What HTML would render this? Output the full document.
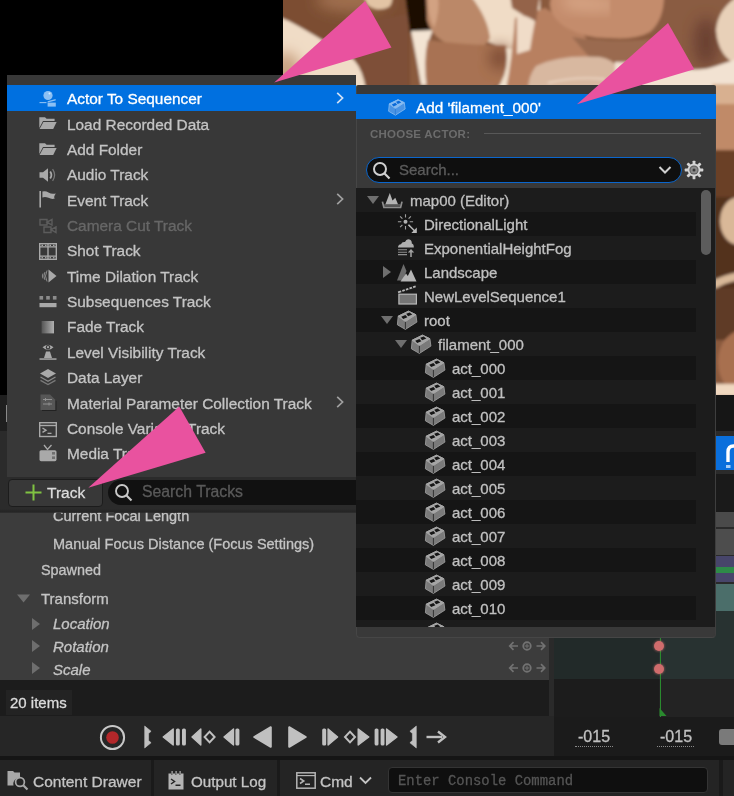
<!DOCTYPE html>
<html><head><meta charset="utf-8">
<style>
*{margin:0;padding:0;box-sizing:border-box}
html,body{width:734px;height:796px;overflow:hidden;background:#000}
body{position:relative;font-family:"Liberation Sans",sans-serif;font-size:15px;color:#c0c0c0}
.a{position:absolute}
.t{position:absolute;white-space:nowrap;line-height:20px;height:20px;-webkit-text-stroke:0.3px currentColor}
svg{position:absolute;overflow:visible}
</style></head><body><div style="position:absolute;left:0;top:0;width:734px;height:796px;overflow:hidden;will-change:transform">

<!-- ===== viewport image ===== -->
<div class="a" style="left:283px;top:0;width:451px;height:395px;overflow:hidden;background:#8a5a3e">
<svg width="451" height="395" viewBox="283 0 451 395" style="left:0;top:0">
<defs>
<filter id="bl" x="-10%" y="-10%" width="120%" height="120%"><feGaussianBlur stdDeviation="1.6"/></filter>
<filter id="bl2" x="-50%" y="-50%" width="200%" height="200%"><feGaussianBlur stdDeviation="7"/></filter>
</defs>
<g filter="url(#bl)">
<rect x="270" y="-10" width="480" height="420" fill="#8a5a3e"/>
<rect x="270" y="-10" width="140" height="100" fill="#7c4e32"/>
<ellipse cx="352" cy="0" rx="36" ry="12" fill="#a07050" filter="url(#bl2)"/>
<path d="M362 -10 H393 Q393 4 389 7 Q383 10 376 9 Q368 7 366 2Z" fill="#e2c4a4"/>
<path d="M270 14 Q285 18 300 27 Q330 44 354 60 Q363 70 366 90 H270Z" fill="#f0dcc6"/>
<ellipse cx="286" cy="72" rx="14" ry="20" fill="#c8a080" filter="url(#bl2)"/>
<path d="M358 26 Q385 18 408 14 V90 H367 Q363 68 356 61Z" fill="#7e5038"/>
<path d="M405 -5 H441 L437 30 Q420 33 410 33Z" fill="#1c0c06"/>
<path d="M411 31 L433 30 Q426 45 427 58 Q428 72 431 85 L421 85 Q416 55 411 31Z" fill="#f3e4d3"/>
<path d="M445 -5 H540 V54 Q520 50 505 48 Q480 40 465 30 Q450 16 445 -5Z" fill="#f0dcc6"/>
<path d="M426 -5 H470 Q488 18 490 38 Q484 52 458 48 Q432 40 427 20Z" fill="#bb8868"/>
<path d="M428 -4 Q427 14 434 28 Q440 12 438 -4Z" fill="#d2a282"/>
<path d="M428 40 Q470 46 505 45 Q515 56 510 72 Q502 90 470 90 H427 Q423 60 428 40Z" fill="#a87252"/>
<ellipse cx="500" cy="58" rx="11" ry="12" fill="#7e4e36" filter="url(#bl2)"/>
<path d="M506 48 Q520 50 538 52 V90 H496 Q510 72 506 48Z" fill="#f0e0cc"/>
<path d="M515 18 L545 8 L580 30 L600 56 L560 62 L538 90 H506 Q512 60 515 18Z" fill="#b88060"/>
<path d="M510 -5 H540 L536 22 Q524 16 512 8Z" fill="#94644a"/>
<path d="M517 14 Q528 16 535 21 Q532 36 530 50 L517 54Z" fill="#f0dcc8"/>
<ellipse cx="608" cy="4" rx="58" ry="34" fill="#c48c6c"/>
<path d="M560 -4 Q600 -4 630 6 Q600 14 566 8Z" fill="#d9a888" filter="url(#bl2)"/>
<path d="M648 2 Q645 18 636 30" stroke="#e6c4a4" stroke-width="1.4" fill="none"/>
<path d="M572 37 Q620 44 660 38 V64 Q620 64 590 58Z" fill="#9a6a50"/>
<path d="M536 66 Q560 54 600 57 Q625 62 625 90 H528 Q528 76 536 66Z" fill="#d8b8a0"/>
<path d="M548 83 Q575 76 605 79" stroke="#f0dccb" stroke-width="1.3" fill="none"/>
<path d="M652 -5 H740 V72 H652Z" fill="#8a5c42"/>
<path d="M610 -5 H664 Q664 20 650 32 Q636 40 610 38Z" fill="#c48c6c"/>
<ellipse cx="706" cy="42" rx="12" ry="24" fill="#6a4030" filter="url(#bl2)"/>
<path d="M740 -5 V66 Q718 58 716 30 Q718 8 740 -5Z" fill="#e8d0b8"/>
<path d="M615 62 Q650 62 680 68 Q700 72 716 66 L740 58 V90 H615Z" fill="#f2e2d2"/>
<!-- right strip -->
<rect x="712" y="84" width="30" height="70" fill="#c08a68"/>
<rect x="712" y="84" width="30" height="20" fill="#d8b090"/>
<rect x="712" y="150" width="30" height="50" fill="#6a4028"/>
<rect x="712" y="197" width="30" height="92" fill="#52301e"/>
<ellipse cx="739" cy="221" rx="19" ry="24" fill="#d9b898"/>
<path d="M712 281 Q725 274 740 272 L740 280 Q725 282 714 290Z" fill="#d8b898"/>
<rect x="712" y="288" width="30" height="52" fill="#5e3a26"/>
<ellipse cx="743" cy="362" rx="25" ry="32" fill="#a87050"/>
<rect x="712" y="384" width="30" height="12" fill="#f0d8c0"/>
</g>
</svg>
</div>

<!-- ===== background panels ===== -->
<div class="a" style="left:0;top:395px;width:734px;height:36px;background:#1f1f1f"></div>
<div class="a" style="left:715px;top:395px;width:19px;height:36px;background:#161616"></div>
<div class="a" style="left:0;top:431px;width:734px;height:81px;background:#2b2b2b"></div>
<div class="a" style="left:5.5px;top:405px;width:1.3px;height:17px;background:#8a8a8a"></div>
<!-- blue button right -->
<div class="a" style="left:715px;top:436px;width:19px;height:34px;background:#0a6fdc"></div>
<div class="a" style="left:715px;top:474px;width:19px;height:38px;background:#1a1a1a"></div>

<!-- properties panel -->
<div class="a" style="left:0;top:512px;width:549px;height:168px;background:#3c3c3c"></div>
<div class="a" style="left:549px;top:474px;width:5px;height:242px;background:#2a2a2a"></div>
<!-- timeline -->
<div class="a" style="left:554px;top:512px;width:180px;height:15px;background:#4a4a4a"></div>
<div class="a" style="left:554px;top:527px;width:180px;height:2px;background:#2a2a2a"></div>
<div class="a" style="left:554px;top:529px;width:180px;height:26px;background:#4d4d4d"></div>
<div class="a" style="left:554px;top:555px;width:180px;height:1px;background:#2a2a2a"></div>
<div class="a" style="left:554px;top:556px;width:180px;height:26px;background:#47456a"></div>
<div class="a" style="left:554px;top:567px;width:180px;height:6px;background:#2e8a48"></div>
<div class="a" style="left:554px;top:582px;width:180px;height:2px;background:#2a2a2a"></div>
<div class="a" style="left:554px;top:584px;width:180px;height:27px;background:#4b6e6a"></div>
<div class="a" style="left:554px;top:611px;width:105px;height:68px;background:#222a29"></div>
<div class="a" style="left:659px;top:611px;width:75px;height:68px;background:#283231"></div>
<div class="a" style="left:554px;top:679px;width:105px;height:38px;background:#1c1c1c"></div>
<div class="a" style="left:659px;top:679px;width:75px;height:38px;background:#232323"></div>
<div class="a" style="left:659.5px;top:611px;width:1.6px;height:106px;background:#2a8a2e"></div>
<svg style="left:659px;top:708px" width="9" height="9"><path d="M0.5 0 L0.5 8 L7.5 8 Z" fill="#2a8a2e"/></svg>
<div class="a" style="left:653.5px;top:640.5px;width:10px;height:10px;border-radius:5px;background:#cf6c6c;box-shadow:0 0 2px 1px rgba(220,120,120,.35)"></div>
<div class="a" style="left:653.5px;top:663.5px;width:10px;height:10px;border-radius:5px;background:#cf6c6c;box-shadow:0 0 2px 1px rgba(220,120,120,.35)"></div>

<!-- items row -->
<div class="a" style="left:0;top:680px;width:549px;height:36px;background:#1c1c1c"></div>
<div class="a" style="left:6px;top:690px;width:66px;height:25px;background:#232323"></div>
<div class="t" style="left:10px;top:693px;color:#dcdcdc">20 items</div>

<!-- transport -->
<div class="a" style="left:0;top:716px;width:554px;height:40px;background:#262626"></div>
<div class="a" style="left:554px;top:717px;width:180px;height:39px;background:#1b1b1b"></div>
<div class="a" style="left:0;top:756px;width:734px;height:4px;background:#151515"></div>
<!-- status bar -->
<div class="a" style="left:0;top:760px;width:734px;height:36px;background:#242424"></div>

<div class="t" style="left:53px;top:506px;color:#c4c4c4;font-size:14.5px;">Current Focal Length</div>
<div class="t" style="left:53px;top:534px;color:#c4c4c4;font-size:14.5px;">Manual Focus Distance (Focus Settings)</div>
<div class="t" style="left:41px;top:560px;color:#c4c4c4;font-size:14.4px;">Spawned</div>
<div class="t" style="left:41px;top:589px;color:#c4c4c4;font-size:15px;">Transform</div>
<div class="t" style="left:53px;top:614px;color:#c4c4c4;font-style:italic;font-size:15px;">Location</div>
<div class="t" style="left:53px;top:637px;color:#c4c4c4;font-style:italic;font-size:15px;">Rotation</div>
<div class="t" style="left:53px;top:660px;color:#c4c4c4;font-style:italic;font-size:15px;">Scale</div>
<svg style="left:17px;top:594px" width="13" height="9" viewBox="0 0 13 9"><path d="M0 0.5 H13 L6.5 8.5Z" fill="#6e6e6e"/></svg>
<svg style="left:32px;top:618px" width="8" height="12" viewBox="0 0 8 12"><path d="M0 0 L8 6 L0 12Z" fill="#6e6e6e"/></svg>
<svg style="left:32px;top:640px" width="8" height="12" viewBox="0 0 8 12"><path d="M0 0 L8 6 L0 12Z" fill="#6e6e6e"/></svg>
<svg style="left:32px;top:662px" width="8" height="12" viewBox="0 0 8 12"><path d="M0 0 L8 6 L0 12Z" fill="#6e6e6e"/></svg>
<svg style="left:508px;top:640px" width="40" height="12" viewBox="0 0 40 12"><g stroke="#727272" stroke-width="1.7" fill="none"><path d="M10 6 H2 M5.5 2.2 L1.7 6 L5.5 9.8"/><circle cx="19" cy="6" r="3.8"/><path d="M19 3.5 V8.5 M16.5 6 H21.5" stroke-width="1"/><path d="M28.5 6 H36.5 M33 2.2 L36.8 6 L33 9.8"/></g></svg>
<svg style="left:508px;top:662px" width="40" height="12" viewBox="0 0 40 12"><g stroke="#727272" stroke-width="1.7" fill="none"><path d="M10 6 H2 M5.5 2.2 L1.7 6 L5.5 9.8"/><circle cx="19" cy="6" r="3.8"/><path d="M19 3.5 V8.5 M16.5 6 H21.5" stroke-width="1"/><path d="M28.5 6 H36.5 M33 2.2 L36.8 6 L33 9.8"/></g></svg>
<svg style="left:99px;top:724px" width="27" height="27" viewBox="0 0 27 27"><circle cx="13.5" cy="13.5" r="11.6" stroke="#c8c8c8" stroke-width="2" fill="none"/><circle cx="13.5" cy="13.5" r="6.3" fill="#b3272a"/></svg>
<svg style="left:144px;top:726px" width="8" height="22" viewBox="0 0 8 22"><path d="M0.7 0 L7.1 5.3 L4.6 7.5 V14.5 L7.1 16.7 L0.7 22 Z" fill="#c0c0c0" stroke="#c0c0c0" stroke-width="0.6" stroke-linejoin="round"/></svg>
<svg style="left:162px;top:728px" width="25" height="18" viewBox="0 0 25 18"><path d="M1.2 9 L11.2 1 V17Z" fill="#c0c0c0" stroke="#c0c0c0" stroke-width="1.4" stroke-linejoin="round"/><rect x="13.9" y="0.5" width="3.9" height="17" rx="1.6" fill="#c0c0c0"/><rect x="20" y="0.5" width="3.9" height="17" rx="1.6" fill="#c0c0c0"/></svg>
<svg style="left:191px;top:728px" width="25" height="18" viewBox="0 0 25 18"><path d="M1 9 L9.8 1 V17Z" fill="#c0c0c0" stroke="#c0c0c0" stroke-width="1.4" stroke-linejoin="round"/><path d="M18.6 3.6 L23.6 9 L18.6 14.4 L13.6 9Z" fill="none" stroke="#c0c0c0" stroke-width="2"/></svg>
<svg style="left:223px;top:728px" width="17" height="18" viewBox="0 0 17 18"><path d="M1 9 L10.5 1 V17Z" fill="#c0c0c0" stroke="#c0c0c0" stroke-width="1.4" stroke-linejoin="round"/><rect x="12.4" y="0.5" width="4" height="17" rx="1.6" fill="#c0c0c0"/></svg>
<svg style="left:253px;top:726px" width="19" height="22" viewBox="0 0 19 22"><path d="M1.2 11 L17.8 1.2 V20.8Z" fill="#c0c0c0" stroke="#c0c0c0" stroke-width="2" stroke-linejoin="round"/></svg>
<svg style="left:288px;top:726px" width="19" height="22" viewBox="0 0 19 22"><path d="M17.8 11 L1.2 1.2 V20.8Z" fill="#c0c0c0" stroke="#c0c0c0" stroke-width="2" stroke-linejoin="round"/></svg>
<svg style="left:322px;top:728px" width="17" height="18" viewBox="0 0 17 18"><rect x="0.2" y="0.5" width="4" height="17" rx="1.6" fill="#c0c0c0"/><path d="M15.6 9 L6.1 1 V17Z" fill="#c0c0c0" stroke="#c0c0c0" stroke-width="1.4" stroke-linejoin="round"/></svg>
<svg style="left:344px;top:728px" width="26" height="18" viewBox="0 0 26 18"><path d="M6 3.6 L11 9 L6 14.4 L1 9Z" fill="none" stroke="#c0c0c0" stroke-width="2"/><path d="M24.8 9 L14.2 1 V17Z" fill="#c0c0c0" stroke="#c0c0c0" stroke-width="1.4" stroke-linejoin="round"/></svg>
<svg style="left:374px;top:728px" width="24" height="18" viewBox="0 0 24 18"><rect x="0.6" y="0.5" width="3.9" height="17" rx="1.6" fill="#c0c0c0"/><rect x="6.6" y="0.5" width="3.9" height="17" rx="1.6" fill="#c0c0c0"/><path d="M23 9 L12.6 1 V17Z" fill="#c0c0c0" stroke="#c0c0c0" stroke-width="1.4" stroke-linejoin="round"/></svg>
<svg style="left:409px;top:726px" width="8" height="22" viewBox="0 0 8 22"><path d="M7.3 0 L0.9 5.3 L3.4 7.5 V14.5 L0.9 16.7 L7.3 22 Z" fill="#c0c0c0" stroke="#c0c0c0" stroke-width="0.6" stroke-linejoin="round"/></svg>
<svg style="left:426px;top:730px" width="21" height="14" viewBox="0 0 21 14"><path d="M0.5 7 H16" stroke="#c0c0c0" stroke-width="2.4"/><path d="M12 1.5 L19 7 L12 12.5" stroke="#c0c0c0" stroke-width="2.4" fill="none"/></svg>
<div class="t" style="left:578px;top:727px;color:#c0c0c0;font-size:16px">-015</div>
<div class="a" style="left:575px;top:746px;width:38px;height:0;border-top:1px dotted #8a8a8a"></div>
<div class="t" style="left:660px;top:727px;color:#c0c0c0;font-size:16px">-015</div>
<div class="a" style="left:657px;top:746px;width:37px;height:0;border-top:1px dotted #8a8a8a"></div>
<div class="a" style="left:719px;top:729px;width:20px;height:16px;border-radius:3px;background:#7a7a7a"></div>
<div class="a" style="left:151px;top:760px;width:3px;height:36px;background:#1a1a1a"></div>
<div class="a" style="left:277px;top:760px;width:3px;height:36px;background:#1a1a1a"></div>
<div class="a" style="left:719px;top:760px;width:4px;height:36px;background:#1a1a1a"></div>
<svg style="left:7px;top:770px" width="22" height="20" viewBox="0 0 22 20"><path d="M0.5 1 H6 L7.5 2.5 H13 V8 A6 6 0 0 0 6.5 15.5 H0.5Z" fill="#a8a8a8"/><circle cx="13" cy="12" r="4.4" stroke="#a8a8a8" stroke-width="1.7" fill="none"/><path d="M16.2 15.2 L20.5 19.5" stroke="#a8a8a8" stroke-width="2.2"/></svg>
<div class="t" style="left:33px;top:772px;color:#c4c4c4;font-size:15.5px">Content Drawer</div>
<svg style="left:168px;top:771px" width="16" height="19" viewBox="0 0 16 19"><path d="M0.5 2.5 H15.5 V18.5 H0.5Z" fill="#b4b4b4"/><g fill="#242424"><rect x="3" y="0" width="2" height="4"/><rect x="7" y="0" width="2" height="4"/><rect x="11" y="0" width="2" height="4"/></g><rect x="3.5" y="0" width="1.2" height="4" fill="#b4b4b4"/><rect x="7.5" y="0" width="1.2" height="4" fill="#b4b4b4"/><rect x="11.5" y="0" width="1.2" height="4" fill="#b4b4b4"/><path d="M3 8 L6.5 10.5 L3 13" stroke="#242424" stroke-width="1.5" fill="none"/><rect x="7.5" y="13.5" width="5" height="1.5" fill="#242424"/></svg>
<div class="t" style="left:191px;top:772px;color:#c4c4c4;font-size:15.2px">Output Log</div>
<svg style="left:296px;top:772px" width="20" height="17" viewBox="0 0 20 17"><rect x="0.8" y="0.8" width="18.4" height="15.4" stroke="#b4b4b4" stroke-width="1.5" fill="none"/><path d="M0.8 3.6 H19.2" stroke="#b4b4b4" stroke-width="1.2"/><path d="M4 6.5 L7.8 9 L4 11.5" stroke="#b4b4b4" stroke-width="1.5" fill="none"/><rect x="9" y="11.5" width="5" height="1.5" fill="#b4b4b4"/></svg>
<div class="t" style="left:320px;top:772px;color:#c4c4c4;font-size:15.5px">Cmd</div>
<svg style="left:359px;top:776px" width="13" height="9" viewBox="0 0 13 9"><path d="M1 1.5 L6.5 7 L12 1.5" stroke="#c4c4c4" stroke-width="1.8" fill="none"/></svg>
<div class="a" style="left:388px;top:767px;width:320px;height:26px;border-radius:4px;background:#0f0f0f;border:1px solid #343434"></div>
<div class="t" style="left:398px;top:771px;color:#555555;font-family:'Liberation Mono',monospace;font-size:13.9px">Enter Console Command</div>
<svg style="left:724px;top:440px" width="15" height="30" viewBox="0 0 15 30"><path d="M4 22 V12 Q4 6 9.5 6 Q15 6 15 12 V22" stroke="#ffffff" stroke-width="3.4" fill="none"/><rect x="2" y="25" width="4.5" height="3" fill="#a8cdf5"/></svg>
<!-- ===== left menu ===== -->

<div class="a" style="left:7px;top:75px;width:349px;height:402px;background:#383838"></div>
<div class="a" style="left:7px;top:85px;width:349px;height:26px;background:#0070e0"></div>
<div class="t" style="left:67px;top:89px;color:#ffffff;font-size:15.4px">Actor To Sequencer</div>
<svg style="left:39px;top:89px" width="18" height="18" viewBox="0 0 18 18"><circle cx="9" cy="6.5" r="4.6" fill="#8cc0f4"/><circle cx="10.5" cy="4.5" r="1" fill="#d8ebff"/><path d="M0.5 13.6 H7.5" stroke="#8cc0f4" stroke-width="1.1"/><path d="M8.6 12.2 L16.6 10 V11.4 L8.6 13.6Z" fill="#8cc0f4"/><rect x="8.6" y="13.6" width="8.2" height="4" fill="#8cc0f4"/></svg>
<svg style="left:336px;top:92px" width="8" height="12" viewBox="0 0 8 12"><path d="M1.2 0.8 L6.6 6 L1.2 11.2" stroke="#cfe0f5" stroke-width="1.7" fill="none"/></svg>
<div class="t" style="left:67px;top:115px;color:#c4c4c4;font-size:15.4px">Load Recorded Data</div>
<svg style="left:39px;top:114px" width="18" height="18" viewBox="0 0 18 18"><path d="M0.3 3.2 H6 L7.6 4.8 H15.6 V7 H4 L0.3 14Z" fill="#a9a9a9"/><path d="M4.4 7.9 H17.6 L14.2 15 H0.6Z" fill="#a9a9a9"/></svg>
<div class="t" style="left:67px;top:140px;color:#c4c4c4;font-size:15.4px">Add Folder</div>
<svg style="left:39px;top:140px" width="18" height="18" viewBox="0 0 18 18"><path d="M0.3 3.2 H6 L7.6 4.8 H15.6 V7 H4 L0.3 14Z" fill="#a9a9a9"/><path d="M4.4 7.9 H17.6 L14.2 15 H0.6Z" fill="#a9a9a9"/></svg>
<div class="t" style="left:67px;top:165px;color:#c4c4c4;font-size:15.4px">Audio Track</div>
<svg style="left:39px;top:165px" width="18" height="18" viewBox="0 0 18 18"><g transform="translate(0 1)"><path d="M0.5 6.3 H4 L9 2.2 V15.8 L4 11.7 H0.5Z" fill="#a9a9a9"/><path d="M11.2 5.5 Q13.6 9 11.2 12.5" stroke="#a9a9a9" stroke-width="1.8" fill="none"/><path d="M13.6 3.2 Q17.6 9 13.6 14.8" stroke="#7a7a7a" stroke-width="1.2" fill="none"/></g></svg>
<div class="t" style="left:67px;top:191px;color:#c4c4c4;font-size:15.4px">Event Track</div>
<svg style="left:39px;top:190px" width="18" height="18" viewBox="0 0 18 18"><rect x="0.4" y="1" width="1.6" height="16.5" fill="#a9a9a9"/><path d="M3.4 1.6 Q6.5 0.6 9.5 2.6 Q13 4.6 16.8 3.4 Q14.2 7 15.8 8.6 Q12.6 9.6 9.5 7.8 Q6.2 6.2 3.4 7.4Z" fill="#a9a9a9"/></svg>
<svg style="left:336px;top:193px" width="8" height="12" viewBox="0 0 8 12"><path d="M1.2 0.8 L6.6 6 L1.2 11.2" stroke="#a0a0a0" stroke-width="1.7" fill="none"/></svg>
<div class="t" style="left:67px;top:216px;color:#676767;font-size:15.4px">Camera Cut Track</div>
<svg style="left:39px;top:216px" width="18" height="18" viewBox="0 0 18 18"><g fill="none" stroke="#5c5c5c" stroke-width="1.4"><path d="M1 3.5 H8 V9 H1Z M8 6.2 L13 3.5 V9Z"/><path d="M5 11 H12 V16.5 H5Z M12 13.7 L17 11 V16.5Z"/></g></svg>
<div class="t" style="left:67px;top:241px;color:#c4c4c4;font-size:15.4px">Shot Track</div>
<svg style="left:39px;top:241px" width="18" height="18" viewBox="0 0 18 18"><g transform="translate(0 1.5)"><g fill="none" stroke="#a9a9a9" stroke-width="1.4"><rect x="0.7" y="1.2" width="16.6" height="15.6"/><path d="M0.7 4.4 H17.3 M0.7 13.6 H17.3 M9 1.2 V16.8"/></g><g fill="#a9a9a9"><rect x="2.5" y="2.2" width="1.5" height="1.3"/><rect x="6" y="2.2" width="1.5" height="1.3"/><rect x="10.5" y="2.2" width="1.5" height="1.3"/><rect x="14" y="2.2" width="1.5" height="1.3"/><rect x="2.5" y="14.6" width="1.5" height="1.3"/><rect x="6" y="14.6" width="1.5" height="1.3"/><rect x="10.5" y="14.6" width="1.5" height="1.3"/><rect x="14" y="14.6" width="1.5" height="1.3"/></g></g></svg>
<div class="t" style="left:67px;top:267px;color:#c4c4c4;font-size:15.4px">Time Dilation Track</div>
<svg style="left:39px;top:267px" width="18" height="18" viewBox="0 0 18 18"><path d="M9.5 2.5 L17.5 9 L9.5 15.5Z" fill="#a9a9a9"/><g stroke="#8a8a8a" stroke-width="1" fill="none"><path d="M8 3.5 Q5 9 8 14.5"/><path d="M6 5 Q3.8 9 6 13"/><path d="M4 6.5 Q2.6 9 4 11.5"/></g></svg>
<div class="t" style="left:67px;top:292px;color:#c4c4c4;font-size:15.4px">Subsequences Track</div>
<svg style="left:39px;top:292px" width="18" height="18" viewBox="0 0 18 18"><rect x="0.5" y="4" width="3.6" height="3.6" fill="#8c8c8c"/><rect x="7.2" y="4" width="3.6" height="3.6" fill="#8c8c8c"/><rect x="13.9" y="4" width="3.6" height="3.6" fill="#8c8c8c"/><rect x="0.5" y="11" width="17" height="4.2" fill="#a9a9a9"/></svg>
<div class="t" style="left:67px;top:317px;color:#c4c4c4;font-size:15.4px">Fade Track</div>
<svg style="left:39px;top:317px" width="18" height="18" viewBox="0 0 18 18"><defs><linearGradient id="fg" x1="0" x2="1"><stop offset="0" stop-color="#555"/><stop offset="1" stop-color="#b0b0b0"/></linearGradient></defs><rect x="2.6" y="4" width="12.4" height="12.4" fill="url(#fg)"/></svg>
<div class="t" style="left:67px;top:343px;color:#c4c4c4;font-size:15.4px">Level Visibility Track</div>
<svg style="left:39px;top:343px" width="18" height="18" viewBox="0 0 18 18"><path d="M3.5 4.2 Q9 -0.8 14.5 4.2 Q9 9.2 3.5 4.2Z" fill="#a9a9a9"/><circle cx="9" cy="4.2" r="2.2" fill="#383838"/><circle cx="9" cy="4.2" r="1.1" fill="#a9a9a9"/><path d="M5 15 L7 8.5 H11 L13 15Z" fill="#a9a9a9"/><rect x="0.5" y="15.3" width="17" height="1.5" fill="#a9a9a9"/></svg>
<div class="t" style="left:67px;top:368px;color:#c4c4c4;font-size:15.4px">Data Layer</div>
<svg style="left:39px;top:368px" width="18" height="18" viewBox="0 0 18 18"><path d="M9 1 L17 5.5 L9 10 L1 5.5Z" fill="#a9a9a9"/><path d="M1.5 9 L9 13.2 L16.5 9" stroke="#8a8a8a" stroke-width="1.3" fill="none"/><path d="M1.5 12.4 L9 16.6 L16.5 12.4" stroke="#7a7a7a" stroke-width="1.3" fill="none"/></svg>
<div class="t" style="left:67px;top:394px;color:#c4c4c4;font-size:15.4px">Material Parameter Collection Track</div>
<svg style="left:39px;top:393px" width="18" height="18" viewBox="0 0 18 18"><path d="M1.5 1.5 H11 L16.5 7 V17 H1.5Z" fill="#565656"/><path d="M3 17 H16.5 V7 L17.5 8 V18 H3Z" fill="#222"/><g stroke="#909090" stroke-width="1"><path d="M4 6.5 H13 M4 11 H13 M6.5 5 V8 M10 9.5 V12.5"/></g></svg>
<svg style="left:336px;top:396px" width="8" height="12" viewBox="0 0 8 12"><path d="M1.2 0.8 L6.6 6 L1.2 11.2" stroke="#a0a0a0" stroke-width="1.7" fill="none"/></svg>
<div class="t" style="left:67px;top:419px;color:#c4c4c4;font-size:15.4px">Console Variable Track</div>
<svg style="left:39px;top:419px" width="18" height="18" viewBox="0 0 18 18"><g transform="translate(0 1.5)"><g fill="none" stroke="#a9a9a9" stroke-width="1.4"><rect x="0.7" y="2.2" width="16.6" height="13.8"/><path d="M0.7 5 H17.3"/><path d="M3.5 7.5 L7 9.7 L3.5 11.9"/></g><rect x="8.5" y="12.2" width="4" height="1.3" fill="#a9a9a9"/></g></svg>
<div class="t" style="left:67px;top:444px;color:#c4c4c4;font-size:15.4px">Media Track</div>
<svg style="left:39px;top:444px" width="18" height="18" viewBox="0 0 18 18"><rect x="0.5" y="6.2" width="17" height="11" rx="1.6" fill="#a9a9a9"/><rect x="13" y="8" width="3" height="2.6" fill="#707070"/><rect x="13" y="12.4" width="3" height="2.6" fill="#707070"/><path d="M5 1 L8.5 5.5 L12.5 1" stroke="#a9a9a9" stroke-width="1.3" fill="none"/></svg>
<!-- ===== toolbar row ===== -->
<div class="a" style="left:0;top:477px;width:356px;height:35px;background:#2b2b2b"></div>
<div class="a" style="left:0;top:509px;width:356px;height:4px;background:linear-gradient(#2b2b2b,#252525 60%,rgba(40,40,40,0.6))"></div>
<div class="a" style="left:8px;top:479px;width:95px;height:28px;border-radius:4px;background:#383838;border:1px solid #1c1c1c"></div>
<svg style="left:25px;top:484px" width="17" height="17" viewBox="0 0 17 17"><path d="M8.5 0.5 V16.5 M0.5 8.5 H16.5" stroke="#80c342" stroke-width="2"/></svg>
<div class="t" style="left:47px;top:483px;color:#dcdcdc;font-size:15.5px">Track</div>
<div class="a" style="left:108px;top:480px;width:260px;height:25px;border-radius:12.5px;background:#111111"></div>
<svg style="left:114px;top:483px" width="20" height="20" viewBox="0 0 20 20"><circle cx="8" cy="8" r="6" stroke="#c8c8c8" stroke-width="1.9" fill="none"/><path d="M12.3 12.3 L17.5 17.5" stroke="#c8c8c8" stroke-width="2.1"/></svg>
<div class="t" style="left:142px;top:482px;color:#5a5a5a;font-size:15.8px">Search Tracks</div>
<!-- ===== submenu ===== -->
<div class="a" style="left:356px;top:85px;width:360px;height:553px;background:#393939;border:1.5px solid #464646;border-top:0;border-right-color:#3e3e3e;border-radius:2px 2px 4px 4px"></div>

<div class="a" style="left:356px;top:94px;width:360px;height:25px;background:#0070e0"></div>
<svg style="left:383.6px;top:97.1px" width="25.5" height="20.4" viewBox="0 0 30 24"><path d="M6.2 8.2 L16.5 3.2 L23.9 6.7 L24.9 14.1 L13.4 21.4 L5.4 16.8Z" fill="#4a94e4" stroke="#8cc0f2" stroke-width="0.9" stroke-linejoin="round"/><path d="M6.2 8.2 L16.5 3.2 L23.9 6.7 L13.4 13.5Z" fill="#86bbf1" stroke="#86bbf1" stroke-width="1" stroke-linejoin="round"/><path d="M13.4 13.9 V21" stroke="#2a7ad8" stroke-width="0.9"/><path d="M9.2 8.8 L13.4 6.9 L15.4 9.2 L11.2 11.1Z M14.2 5.7 L17.6 4.4 L20.3 6.5 L16.1 8.2Z" fill="#0a6ad8"/></svg>
<div class="t" style="left:416px;top:98px;color:#ffffff;font-size:15.3px">Add 'filament_000'</div>
<div class="t" style="left:370px;top:123.5px;color:#6c6c6c;font-size:11.5px;font-weight:bold;letter-spacing:0.24px;-webkit-text-stroke:0">CHOOSE ACTOR:</div>
<div class="a" style="left:484px;top:133px;width:217px;height:1px;background:#585858"></div>
<div class="a" style="left:366px;top:157px;width:316px;height:26px;border-radius:13px;background:#0f0f0f;border:1.8px solid #0b66cc"></div>
<svg style="left:372px;top:161px" width="20" height="20" viewBox="0 0 20 20"><circle cx="8" cy="8" r="6" stroke="#d0d0d0" stroke-width="2" fill="none"/><path d="M12.3 12.3 L17.5 17.5" stroke="#d0d0d0" stroke-width="2.2"/></svg>
<div class="t" style="left:399px;top:160px;color:#5c5c5c">Search...</div>
<svg style="left:658px;top:165px" width="14" height="10" viewBox="0 0 14 10"><path d="M1.5 2 L7 7.5 L12.5 2" stroke="#d0d0d0" stroke-width="2" fill="none"/></svg>
<svg style="left:685px;top:161px" width="18" height="18" viewBox="0 0 18 18"><rect x="7.6" y="-0.3" width="2.8" height="5" rx="0.6" fill="#d4d4d4" transform="rotate(0 9 9)"/><rect x="7.6" y="-0.3" width="2.8" height="5" rx="0.6" fill="#d4d4d4" transform="rotate(45 9 9)"/><rect x="7.6" y="-0.3" width="2.8" height="5" rx="0.6" fill="#d4d4d4" transform="rotate(90 9 9)"/><rect x="7.6" y="-0.3" width="2.8" height="5" rx="0.6" fill="#d4d4d4" transform="rotate(135 9 9)"/><rect x="7.6" y="-0.3" width="2.8" height="5" rx="0.6" fill="#d4d4d4" transform="rotate(180 9 9)"/><rect x="7.6" y="-0.3" width="2.8" height="5" rx="0.6" fill="#d4d4d4" transform="rotate(225 9 9)"/><rect x="7.6" y="-0.3" width="2.8" height="5" rx="0.6" fill="#d4d4d4" transform="rotate(270 9 9)"/><rect x="7.6" y="-0.3" width="2.8" height="5" rx="0.6" fill="#d4d4d4" transform="rotate(315 9 9)"/><circle cx="9" cy="9" r="6.4" fill="#d4d4d4"/><circle cx="9" cy="9" r="4.6" fill="#5a5a5a"/><circle cx="9" cy="9" r="3.6" fill="#8a8a8a"/><circle cx="9" cy="9" r="1.5" fill="#3a3a3a"/></svg>
<div class="a" style="left:356px;top:188px;width:359px;height:439px;background:#1c1c1c;overflow:hidden">
<svg style="left:11px;top:8px" width="12" height="8" viewBox="0 0 12 8"><path d="M0 0 H12 L6 8Z" fill="#6f6f6f"/></svg>
<svg style="left:27px;top:0px" width="22" height="24" viewBox="0 0 22 24"><path d="M2.4 16.3 L6.8 4.9 L9.5 12.5 L12.3 9.8 L15 16.3Z" fill="#b4b4b4"/><path d="M-0.6 13.6 L0.9 19.4 H17.6 L19 13.6" stroke="#8e8e8e" stroke-width="1.7" fill="none"/><path d="M1.2 17 H17.4" stroke="#8e8e8e" stroke-width="1"/></svg>
<div class="t" style="left:54px;top:3px;color:#c0c0c0">map00 (Editor)</div>
<div class="a" style="left:0;top:24px;width:340px;height:24px;background:#151515"></div>
<svg style="left:41px;top:24px" width="22" height="24" viewBox="0 0 22 24"><circle cx="8.5" cy="9.8" r="2" fill="#b0b0b0"/><g stroke="#a0a0a0" stroke-width="1.1"><path d="M8.5 2.2 V5.6 M8.5 14 V17.4 M0.9 9.8 H4.3 M12.7 9.8 H16.1 M3.1 4.4 L5.4 6.7 M11.6 12.9 L13 14.3 M13.9 4.4 L11.6 6.7 M5.4 12.9 L3.1 15.2"/></g><path d="M11.5 12.8 L18.5 19.8" stroke="#b8b8b8" stroke-width="1.5"/><path d="M19.8 21 L19.8 15.5 L14.3 21Z" fill="#b8b8b8"/></svg>
<div class="t" style="left:68px;top:27px;color:#c0c0c0">DirectionalLight</div>
<svg style="left:41px;top:48px" width="22" height="24" viewBox="0 0 22 24"><path d="M1 11.5 Q1 8.5 4 8.3 Q5 5.4 8 6 Q9.5 2.5 12.5 3.6 Q15 4.5 14.8 7.5 Q17 8 16.8 11.5Z" fill="#b0b0b0"/><g stroke="#909090" stroke-width="1.1"><path d="M1 13.8 H10 M1 16.2 H10 M1 18.6 H10"/></g><path d="M14 21 V14.5" stroke="#a0a0a0" stroke-width="1.6"/><path d="M10.8 16.5 L14 13 L17.2 16.5Z" fill="#a0a0a0"/></svg>
<div class="t" style="left:68px;top:51px;color:#c0c0c0">ExponentialHeightFog</div>
<div class="a" style="left:0;top:72px;width:340px;height:24px;background:#151515"></div>
<svg style="left:27px;top:78px" width="8" height="12" viewBox="0 0 8 12"><path d="M0 0 L8 6 L0 12Z" fill="#6f6f6f"/></svg>
<svg style="left:41px;top:72px" width="22" height="24" viewBox="0 0 22 24"><path d="M0 20.6 L6.5 4 L9.5 11 L6 20.6Z" fill="#6c6c6c"/><path d="M3.5 21.4 L9 13.5 L10.8 16 L14 9.5 L19.5 21.4Z" fill="#b4b4b4"/></svg>
<div class="t" style="left:68px;top:75px;color:#c0c0c0">Landscape</div>
<svg style="left:41px;top:96px" width="22" height="24" viewBox="0 0 22 24"><rect x="1.9" y="10.2" width="17.5" height="9.8" fill="#757575" stroke="#b8b8b8" stroke-width="1.2"/><path d="M0.8 7.4 L18.4 1.4 L18.9 3.3 L1.3 9.3Z" fill="#b8b8b8"/><g fill="#1c1c1c"><rect x="4" y="5.2" width="1.2" height="3" transform="rotate(-19 4.6 6.7)"/><rect x="7.6" y="4" width="1.2" height="3" transform="rotate(-19 8.2 5.5)"/><rect x="11.2" y="2.8" width="1.2" height="3" transform="rotate(-19 11.8 4.3)"/><rect x="14.8" y="1.6" width="1.2" height="3" transform="rotate(-19 15.4 3.1)"/></g></svg>
<div class="t" style="left:68px;top:99px;color:#c0c0c0">NewLevelSequence1</div>
<div class="a" style="left:0;top:120px;width:340px;height:24px;background:#151515"></div>
<svg style="left:25px;top:128px" width="12" height="8" viewBox="0 0 12 8"><path d="M0 0 H12 L6 8Z" fill="#6f6f6f"/></svg>
<svg style="left:36px;top:120px" width="30" height="24" viewBox="0 0 30 24"><path d="M6.2 8.2 L16.5 3.2 L23.9 6.7 L24.9 14.1 L13.4 21.4 L5.4 16.8Z" fill="#7a7a7a" stroke="#9a9a9a" stroke-width="0.9" stroke-linejoin="round"/><path d="M6.2 8.2 L16.5 3.2 L23.9 6.7 L13.4 13.5Z" fill="#a6a6a6" stroke="#a6a6a6" stroke-width="1" stroke-linejoin="round"/><path d="M13.4 13.9 V21" stroke="#2a2a2a" stroke-width="0.9"/><path d="M9.2 8.8 L13.4 6.9 L15.4 9.2 L11.2 11.1Z M14.2 5.7 L17.6 4.4 L20.3 6.5 L16.1 8.2Z" fill="#161616"/></svg>
<div class="t" style="left:68px;top:123px;color:#c0c0c0">root</div>
<svg style="left:39px;top:152px" width="12" height="8" viewBox="0 0 12 8"><path d="M0 0 H12 L6 8Z" fill="#6f6f6f"/></svg>
<svg style="left:50px;top:144px" width="30" height="24" viewBox="0 0 30 24"><path d="M6.2 8.2 L16.5 3.2 L23.9 6.7 L24.9 14.1 L13.4 21.4 L5.4 16.8Z" fill="#7a7a7a" stroke="#9a9a9a" stroke-width="0.9" stroke-linejoin="round"/><path d="M6.2 8.2 L16.5 3.2 L23.9 6.7 L13.4 13.5Z" fill="#a6a6a6" stroke="#a6a6a6" stroke-width="1" stroke-linejoin="round"/><path d="M13.4 13.9 V21" stroke="#2a2a2a" stroke-width="0.9"/><path d="M9.2 8.8 L13.4 6.9 L15.4 9.2 L11.2 11.1Z M14.2 5.7 L17.6 4.4 L20.3 6.5 L16.1 8.2Z" fill="#161616"/></svg>
<div class="t" style="left:82px;top:147px;color:#c0c0c0">filament_000</div>
<div class="a" style="left:0;top:168px;width:340px;height:24px;background:#151515"></div>
<svg style="left:64px;top:168px" width="30" height="24" viewBox="0 0 30 24"><path d="M6.2 8.2 L16.5 3.2 L23.9 6.7 L24.9 14.1 L13.4 21.4 L5.4 16.8Z" fill="#7a7a7a" stroke="#9a9a9a" stroke-width="0.9" stroke-linejoin="round"/><path d="M6.2 8.2 L16.5 3.2 L23.9 6.7 L13.4 13.5Z" fill="#a6a6a6" stroke="#a6a6a6" stroke-width="1" stroke-linejoin="round"/><path d="M13.4 13.9 V21" stroke="#2a2a2a" stroke-width="0.9"/><path d="M9.2 8.8 L13.4 6.9 L15.4 9.2 L11.2 11.1Z M14.2 5.7 L17.6 4.4 L20.3 6.5 L16.1 8.2Z" fill="#161616"/></svg>
<div class="t" style="left:96px;top:171px;color:#c0c0c0">act_000</div>
<svg style="left:64px;top:192px" width="30" height="24" viewBox="0 0 30 24"><path d="M6.2 8.2 L16.5 3.2 L23.9 6.7 L24.9 14.1 L13.4 21.4 L5.4 16.8Z" fill="#7a7a7a" stroke="#9a9a9a" stroke-width="0.9" stroke-linejoin="round"/><path d="M6.2 8.2 L16.5 3.2 L23.9 6.7 L13.4 13.5Z" fill="#a6a6a6" stroke="#a6a6a6" stroke-width="1" stroke-linejoin="round"/><path d="M13.4 13.9 V21" stroke="#2a2a2a" stroke-width="0.9"/><path d="M9.2 8.8 L13.4 6.9 L15.4 9.2 L11.2 11.1Z M14.2 5.7 L17.6 4.4 L20.3 6.5 L16.1 8.2Z" fill="#161616"/></svg>
<div class="t" style="left:96px;top:195px;color:#c0c0c0">act_001</div>
<div class="a" style="left:0;top:216px;width:340px;height:24px;background:#151515"></div>
<svg style="left:64px;top:216px" width="30" height="24" viewBox="0 0 30 24"><path d="M6.2 8.2 L16.5 3.2 L23.9 6.7 L24.9 14.1 L13.4 21.4 L5.4 16.8Z" fill="#7a7a7a" stroke="#9a9a9a" stroke-width="0.9" stroke-linejoin="round"/><path d="M6.2 8.2 L16.5 3.2 L23.9 6.7 L13.4 13.5Z" fill="#a6a6a6" stroke="#a6a6a6" stroke-width="1" stroke-linejoin="round"/><path d="M13.4 13.9 V21" stroke="#2a2a2a" stroke-width="0.9"/><path d="M9.2 8.8 L13.4 6.9 L15.4 9.2 L11.2 11.1Z M14.2 5.7 L17.6 4.4 L20.3 6.5 L16.1 8.2Z" fill="#161616"/></svg>
<div class="t" style="left:96px;top:219px;color:#c0c0c0">act_002</div>
<svg style="left:64px;top:240px" width="30" height="24" viewBox="0 0 30 24"><path d="M6.2 8.2 L16.5 3.2 L23.9 6.7 L24.9 14.1 L13.4 21.4 L5.4 16.8Z" fill="#7a7a7a" stroke="#9a9a9a" stroke-width="0.9" stroke-linejoin="round"/><path d="M6.2 8.2 L16.5 3.2 L23.9 6.7 L13.4 13.5Z" fill="#a6a6a6" stroke="#a6a6a6" stroke-width="1" stroke-linejoin="round"/><path d="M13.4 13.9 V21" stroke="#2a2a2a" stroke-width="0.9"/><path d="M9.2 8.8 L13.4 6.9 L15.4 9.2 L11.2 11.1Z M14.2 5.7 L17.6 4.4 L20.3 6.5 L16.1 8.2Z" fill="#161616"/></svg>
<div class="t" style="left:96px;top:243px;color:#c0c0c0">act_003</div>
<div class="a" style="left:0;top:264px;width:340px;height:24px;background:#151515"></div>
<svg style="left:64px;top:264px" width="30" height="24" viewBox="0 0 30 24"><path d="M6.2 8.2 L16.5 3.2 L23.9 6.7 L24.9 14.1 L13.4 21.4 L5.4 16.8Z" fill="#7a7a7a" stroke="#9a9a9a" stroke-width="0.9" stroke-linejoin="round"/><path d="M6.2 8.2 L16.5 3.2 L23.9 6.7 L13.4 13.5Z" fill="#a6a6a6" stroke="#a6a6a6" stroke-width="1" stroke-linejoin="round"/><path d="M13.4 13.9 V21" stroke="#2a2a2a" stroke-width="0.9"/><path d="M9.2 8.8 L13.4 6.9 L15.4 9.2 L11.2 11.1Z M14.2 5.7 L17.6 4.4 L20.3 6.5 L16.1 8.2Z" fill="#161616"/></svg>
<div class="t" style="left:96px;top:267px;color:#c0c0c0">act_004</div>
<svg style="left:64px;top:288px" width="30" height="24" viewBox="0 0 30 24"><path d="M6.2 8.2 L16.5 3.2 L23.9 6.7 L24.9 14.1 L13.4 21.4 L5.4 16.8Z" fill="#7a7a7a" stroke="#9a9a9a" stroke-width="0.9" stroke-linejoin="round"/><path d="M6.2 8.2 L16.5 3.2 L23.9 6.7 L13.4 13.5Z" fill="#a6a6a6" stroke="#a6a6a6" stroke-width="1" stroke-linejoin="round"/><path d="M13.4 13.9 V21" stroke="#2a2a2a" stroke-width="0.9"/><path d="M9.2 8.8 L13.4 6.9 L15.4 9.2 L11.2 11.1Z M14.2 5.7 L17.6 4.4 L20.3 6.5 L16.1 8.2Z" fill="#161616"/></svg>
<div class="t" style="left:96px;top:291px;color:#c0c0c0">act_005</div>
<div class="a" style="left:0;top:312px;width:340px;height:24px;background:#151515"></div>
<svg style="left:64px;top:312px" width="30" height="24" viewBox="0 0 30 24"><path d="M6.2 8.2 L16.5 3.2 L23.9 6.7 L24.9 14.1 L13.4 21.4 L5.4 16.8Z" fill="#7a7a7a" stroke="#9a9a9a" stroke-width="0.9" stroke-linejoin="round"/><path d="M6.2 8.2 L16.5 3.2 L23.9 6.7 L13.4 13.5Z" fill="#a6a6a6" stroke="#a6a6a6" stroke-width="1" stroke-linejoin="round"/><path d="M13.4 13.9 V21" stroke="#2a2a2a" stroke-width="0.9"/><path d="M9.2 8.8 L13.4 6.9 L15.4 9.2 L11.2 11.1Z M14.2 5.7 L17.6 4.4 L20.3 6.5 L16.1 8.2Z" fill="#161616"/></svg>
<div class="t" style="left:96px;top:315px;color:#c0c0c0">act_006</div>
<svg style="left:64px;top:336px" width="30" height="24" viewBox="0 0 30 24"><path d="M6.2 8.2 L16.5 3.2 L23.9 6.7 L24.9 14.1 L13.4 21.4 L5.4 16.8Z" fill="#7a7a7a" stroke="#9a9a9a" stroke-width="0.9" stroke-linejoin="round"/><path d="M6.2 8.2 L16.5 3.2 L23.9 6.7 L13.4 13.5Z" fill="#a6a6a6" stroke="#a6a6a6" stroke-width="1" stroke-linejoin="round"/><path d="M13.4 13.9 V21" stroke="#2a2a2a" stroke-width="0.9"/><path d="M9.2 8.8 L13.4 6.9 L15.4 9.2 L11.2 11.1Z M14.2 5.7 L17.6 4.4 L20.3 6.5 L16.1 8.2Z" fill="#161616"/></svg>
<div class="t" style="left:96px;top:339px;color:#c0c0c0">act_007</div>
<div class="a" style="left:0;top:360px;width:340px;height:24px;background:#151515"></div>
<svg style="left:64px;top:360px" width="30" height="24" viewBox="0 0 30 24"><path d="M6.2 8.2 L16.5 3.2 L23.9 6.7 L24.9 14.1 L13.4 21.4 L5.4 16.8Z" fill="#7a7a7a" stroke="#9a9a9a" stroke-width="0.9" stroke-linejoin="round"/><path d="M6.2 8.2 L16.5 3.2 L23.9 6.7 L13.4 13.5Z" fill="#a6a6a6" stroke="#a6a6a6" stroke-width="1" stroke-linejoin="round"/><path d="M13.4 13.9 V21" stroke="#2a2a2a" stroke-width="0.9"/><path d="M9.2 8.8 L13.4 6.9 L15.4 9.2 L11.2 11.1Z M14.2 5.7 L17.6 4.4 L20.3 6.5 L16.1 8.2Z" fill="#161616"/></svg>
<div class="t" style="left:96px;top:363px;color:#c0c0c0">act_008</div>
<svg style="left:64px;top:384px" width="30" height="24" viewBox="0 0 30 24"><path d="M6.2 8.2 L16.5 3.2 L23.9 6.7 L24.9 14.1 L13.4 21.4 L5.4 16.8Z" fill="#7a7a7a" stroke="#9a9a9a" stroke-width="0.9" stroke-linejoin="round"/><path d="M6.2 8.2 L16.5 3.2 L23.9 6.7 L13.4 13.5Z" fill="#a6a6a6" stroke="#a6a6a6" stroke-width="1" stroke-linejoin="round"/><path d="M13.4 13.9 V21" stroke="#2a2a2a" stroke-width="0.9"/><path d="M9.2 8.8 L13.4 6.9 L15.4 9.2 L11.2 11.1Z M14.2 5.7 L17.6 4.4 L20.3 6.5 L16.1 8.2Z" fill="#161616"/></svg>
<div class="t" style="left:96px;top:387px;color:#c0c0c0">act_009</div>
<div class="a" style="left:0;top:408px;width:340px;height:24px;background:#151515"></div>
<svg style="left:64px;top:408px" width="30" height="24" viewBox="0 0 30 24"><path d="M6.2 8.2 L16.5 3.2 L23.9 6.7 L24.9 14.1 L13.4 21.4 L5.4 16.8Z" fill="#7a7a7a" stroke="#9a9a9a" stroke-width="0.9" stroke-linejoin="round"/><path d="M6.2 8.2 L16.5 3.2 L23.9 6.7 L13.4 13.5Z" fill="#a6a6a6" stroke="#a6a6a6" stroke-width="1" stroke-linejoin="round"/><path d="M13.4 13.9 V21" stroke="#2a2a2a" stroke-width="0.9"/><path d="M9.2 8.8 L13.4 6.9 L15.4 9.2 L11.2 11.1Z M14.2 5.7 L17.6 4.4 L20.3 6.5 L16.1 8.2Z" fill="#161616"/></svg>
<div class="t" style="left:96px;top:411px;color:#c0c0c0">act_010</div>
<svg style="left:64px;top:432px" width="30" height="24" viewBox="0 0 30 24"><path d="M6.2 8.2 L16.5 3.2 L23.9 6.7 L24.9 14.1 L13.4 21.4 L5.4 16.8Z" fill="#7a7a7a" stroke="#9a9a9a" stroke-width="0.9" stroke-linejoin="round"/><path d="M6.2 8.2 L16.5 3.2 L23.9 6.7 L13.4 13.5Z" fill="#a6a6a6" stroke="#a6a6a6" stroke-width="1" stroke-linejoin="round"/><path d="M13.4 13.9 V21" stroke="#2a2a2a" stroke-width="0.9"/><path d="M9.2 8.8 L13.4 6.9 L15.4 9.2 L11.2 11.1Z M14.2 5.7 L17.6 4.4 L20.3 6.5 L16.1 8.2Z" fill="#161616"/></svg>
<div class="t" style="left:96px;top:435px;color:#c0c0c0">act_011</div>
<div class="a" style="left:345px;top:2px;width:10px;height:65px;border-radius:5px;background:#5c5c5c"></div>
</div>
<svg style="left:0;top:0" width="734" height="796" viewBox="0 0 734 796"><path d="M274.2 82.4 L365.2 1.1000000000000085 L391.5 47.400000000000006Z" fill="#e9529f"/></svg>
<svg style="left:0;top:0" width="734" height="796" viewBox="0 0 734 796"><path d="M577 104.3 L668 23.0 L694.3 69.3Z" fill="#e9529f"/></svg>
<svg style="left:0;top:0" width="734" height="796" viewBox="0 0 734 796"><path d="M88.3 487.7 L179.3 406.4 L205.6 452.7Z" fill="#e9529f"/></svg>
</div></body></html>
